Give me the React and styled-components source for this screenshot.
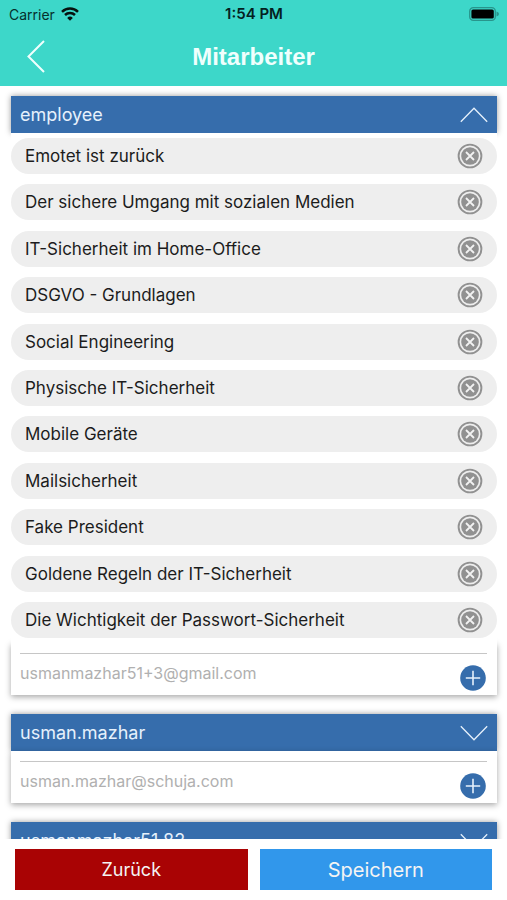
import React, { useState } from 'react';
import styled, { createGlobalStyle } from 'styled-components';

const GlobalStyle = createGlobalStyle`
  * {
    box-sizing: border-box;
  }
  body {
    margin: 0;
    background: #fff;
    font-family: Inter, "Liberation Sans", sans-serif;
  }
  button {
    border: 0;
    padding: 0;
    background: none;
    font-family: inherit;
    cursor: pointer;
  }
  svg {
    display: block;
  }
`

const Screen = styled.div`
  display: flex;
  flex-direction: column;
  height: 100vh;
`

const Header = styled.header`
  flex: none;
  background: #3dd7c9;
`

const StatusBar = styled.div`
  display: grid;
  grid-template-columns: 1fr auto 1fr;
  align-items: center;
  height: 28px;
  padding: 0 8px 0 9px;
  font-size: 14px;
  color: #06302d;
`

const Carrier = styled.div`
  display: flex;
  align-items: center;
  gap: 6px;
`

const Time = styled.div`
  font-size: 15px;
  font-weight: 600;
  line-height: 18px;
  color: #04211f;
`

const Battery = styled.svg`
  justify-self: end;
`

const NavBar = styled.div`
  display: grid;
  grid-template-columns: 48px 1fr 48px;
  align-items: center;
  height: 58px;
  padding: 0 12px;
`

const BackButton = styled.button`
  display: flex;
  justify-content: center;
`

const Title = styled.h1`
  margin: 0;
  font-family: "Liberation Sans", Arial, sans-serif;
  font-size: 24px;
  font-weight: 700;
  line-height: 28px;
  text-align: center;
  color: #f0fffd;
`

const Content = styled.main`
  flex: 1;
  min-height: 0;
  display: flex;
  flex-direction: column;
  gap: 19px;
  padding: 10px 10px 0 11px;
  overflow-y: auto;
  scrollbar-width: none;
`

const Group = styled.section`
  flex: none;
`

const GroupHeader = styled.button`
  display: flex;
  align-items: center;
  justify-content: space-between;
  width: 100%;
  height: 37px;
  padding: 0 9px;
  background: #366dac;
  box-shadow: 0 0 6px rgba(0, 0, 0, 0.4);
  font-size: 18px;
  color: #e6f1fc;
`

const CourseList = styled.ul`
  display: flex;
  flex-direction: column;
  justify-content: space-between;
  min-height: 510px;
  margin: 0;
  padding: 5px 0;
  position: relative;
  background: #fff;
  list-style: none;
`

const Course = styled.li`
  display: flex;
  align-items: center;
  justify-content: space-between;
  height: 36px;
  padding: 0 14px;
  border-radius: 18px;
  background: #eee;
  font-size: 17px;
  color: #1c1c1c;
`

const GroupFooter = styled.div`
  display: flex;
  justify-content: space-between;
  height: 52px;
  padding: 10px 10px 0 9px;
  background: #fff;
  box-shadow: 0 2px 6px rgba(0, 0, 0, 0.35);
`

const Mail = styled.div`
  flex: 1;
  border-top: 1px solid #c6c6c6;
  padding-top: 9px;
  font-size: 16px;
  line-height: 20px;
  color: #b0b0b0;
`

const AddRow = styled.div`
  display: flex;
  padding: 11px 1px 0 0;
  border-top: 1px solid #c6c6c6;
`

const AddButton = styled.button`
  align-self: flex-start;
`

const Actions = styled.footer`
  flex: none;
  display: flex;
  gap: 12px;
  padding: 10px 15px;
`

const ActionButton = styled.button`
  flex: 1;
  height: 41px;
  background: ${props => props.$color};
  font-size: ${props => props.$size};
  color: #f4f4f4;
`

const WifiIcon = () => (
  <svg width="18" height="14" viewBox="0 0 18 14" fill="none" stroke="#06110f" strokeWidth="2.5">
    <path d="M1 4.8 A11.5 11.5 0 0 1 17 4.8" />
    <path d="M4 8 A7.2 7.2 0 0 1 14 8" />
    <path d="M9 13.8 L6.2 10.9 A4 4 0 0 1 11.8 10.9 Z" fill="#06110f" stroke="none" />
  </svg>
)

const BatteryIcon = () => (
  <Battery width="30" height="14" viewBox="0 0 30 14">
    <rect x="0.7" y="0.7" width="25.6" height="12.6" rx="3.6" fill="none" stroke="#28958c" strokeWidth="1.3" />
    <rect x="2.4" y="2.4" width="22.4" height="9.2" rx="1.6" fill="#000" />
    <path d="M27.5 4.6 Q30 5.4 30 7 Q30 8.6 27.5 9.4 Z" fill="#28958c" />
  </Battery>
)

const BackIcon = () => (
  <svg width="18" height="34" viewBox="0 0 18 34" fill="none" stroke="#f0fffd" strokeWidth="2">
    <path d="M17 1 L1.5 16.5 L17 32" />
  </svg>
)

const Chevron = ({ open }) => (
  <svg width="28" height="16" viewBox="0 0 28 16" fill="none" stroke="#e6f1fc" strokeWidth="1.3">
    <path d={open ? 'M0.8 14.8 L14 1.2 L27.2 14.8' : 'M0.8 1.2 L14 14.8 L27.2 1.2'} />
  </svg>
)

const RemoveIcon = () => (
  <svg width="26" height="26" viewBox="0 0 26 26" fill="none">
    <circle cx="13" cy="13" r="11.4" stroke="#919191" strokeWidth="1.9" />
    <circle cx="13" cy="13" r="8.8" fill="#919191" />
    <path d="M9 9 L17 17 M17 9 L9 17" stroke="#f2f2f2" strokeWidth="1.8" />
  </svg>
)

const AddIcon = () => (
  <svg width="26" height="26" viewBox="0 0 26 26">
    <circle cx="13" cy="13" r="12.8" fill="#366dac" />
    <path d="M13 5.8 V20.2 M5.8 13 H20.2" stroke="#e6f1fc" strokeWidth="1.6" />
  </svg>
)

const initialGroups = [
  {
    name: 'employee',
    mail: 'usmanmazhar51+3@gmail.com',
    open: true,
    courses: [
      'Emotet ist zurück',
      'Der sichere Umgang mit sozialen Medien',
      'IT-Sicherheit im Home-Office',
      'DSGVO - Grundlagen',
      'Social Engineering',
      'Physische IT-Sicherheit',
      'Mobile Geräte',
      'Mailsicherheit',
      'Fake President',
      'Goldene Regeln der IT-Sicherheit',
      'Die Wichtigkeit der Passwort-Sicherheit',
    ],
  },
  { name: 'usman.mazhar', mail: 'usman.mazhar@schuja.com', open: false, courses: [] },
  { name: 'usmanmazhar51.82', mail: '', open: false, courses: [] },
]

const App = () => {
  const [groups, setGroups] = useState(initialGroups)

  const toggle = name => {
    setGroups(groups.map(g => (g.name === name ? { ...g, open: !g.open } : g)))
  }

  return (
    <Screen>
      <GlobalStyle />
      <Header>
        <StatusBar>
          <Carrier>
            Carrier
            <WifiIcon />
          </Carrier>
          <Time>1:54 PM</Time>
          <BatteryIcon />
        </StatusBar>
        <NavBar>
          <BackButton aria-label="Zurück">
            <BackIcon />
          </BackButton>
          <Title>Mitarbeiter</Title>
        </NavBar>
      </Header>
      <Content>
        {groups.map(group => (
          <Group key={group.name}>
            <GroupHeader aria-expanded={group.open} onClick={() => toggle(group.name)}>
              {group.name}
              <Chevron open={group.open} />
            </GroupHeader>
            {group.open && group.courses.length > 0 && (
              <CourseList>
                {group.courses.map(course => (
                  <Course key={course}>
                    {course}
                    <button aria-label={`${course} entfernen`}>
                      <RemoveIcon />
                    </button>
                  </Course>
                ))}
              </CourseList>
            )}
            <GroupFooter>
              <Mail>{group.mail}</Mail>
              <AddRow>
                <AddButton aria-label="Hinzufügen">
                  <AddIcon />
                </AddButton>
              </AddRow>
            </GroupFooter>
          </Group>
        ))}
      </Content>
      <Actions>
        <ActionButton $color="#a90304" $size="18px">Zurück</ActionButton>
        <ActionButton $color="#3197eb" $size="20px">Speichern</ActionButton>
      </Actions>
    </Screen>
  )
}

export default App;
